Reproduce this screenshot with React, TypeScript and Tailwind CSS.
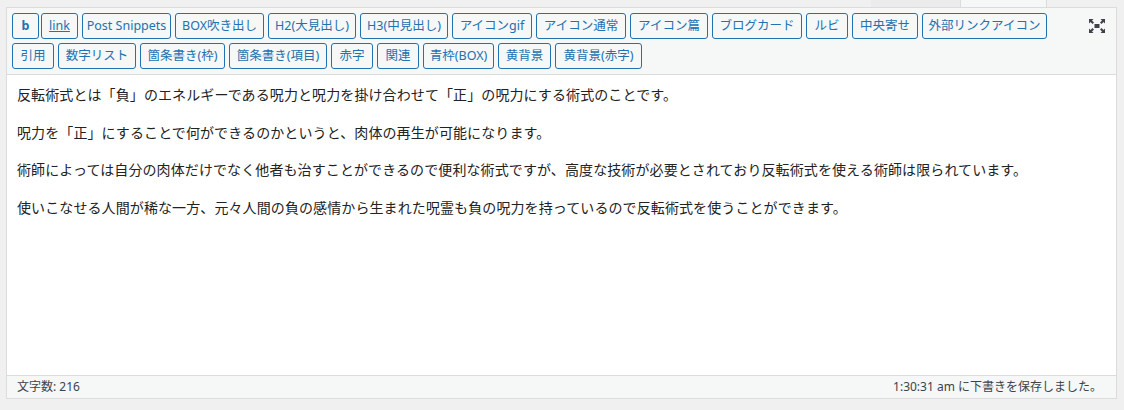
import React from "react";

const row1: { label: string; w: number; cls?: string }[] = [
  { label: "b", w: 27, cls: "font-bold !mr-0" },
  { label: "link", w: 37, cls: "underline" },
  { label: "Post Snippets", w: 89 },
  { label: "BOX吹き出し", w: 89 },
  { label: "H2(大見出し)", w: 88 },
  { label: "H3(中見出し)", w: 88 },
  { label: "アイコンgif", w: 80 },
  { label: "アイコン通常", w: 90 },
  { label: "アイコン篇", w: 78 },
  { label: "ブログカード", w: 90 },
  { label: "ルビ", w: 42 },
  { label: "中央寄せ", w: 66 },
  { label: "外部リンクアイコン", w: 125 },
];

const row2: { label: string; w: number; cls?: string }[] = [
  { label: "引用", w: 42 },
  { label: "数字リスト", w: 78 },
  { label: "箇条書き(枠)", w: 85 },
  { label: "箇条書き(項目)", w: 98 },
  { label: "赤字", w: 42 },
  { label: "関連", w: 42 },
  { label: "青枠(BOX)", w: 71 },
  { label: "黄背景", w: 53 },
  { label: "黄背景(赤字)", w: 87 },
];

const paragraphs = [
  "反転術式とは「負」のエネルギーである呪力と呪力を掛け合わせて「正」の呪力にする術式のことです。",
  "呪力を「正」にすることで何ができるのかというと、肉体の再生が可能になります。",
  "術師によっては自分の肉体だけでなく他者も治すことができるので便利な術式ですが、高度な技術が必要とされており反転術式を使える術師は限られています。",
  "使いこなせる人間が稀な一方、元々人間の負の感情から生まれた呪霊も負の呪力を持っているので反転術式を使うことができます。",
];

function QButton({ label, w, cls }: { label: string; w: number; cls?: string }) {
  return (
    <button
      style={{ width: w }}
      className={`m-[2px] h-[26px] shrink-0 rounded-[3px] border border-[#2271b1] bg-[#f6f7f7] px-0 text-center text-[12.5px] leading-[24px] text-[#2271b1] whitespace-nowrap ${cls ?? ""}`}
    >
      {label}
    </button>
  );
}

function ExpandIcon() {
  return (
    <svg width="16" height="14" viewBox="0 0 16 14" fill="#3c434a">
      <rect x="5.5" y="5" width="5" height="4" />
      <path d="M0 0h4.5l-1.5 1.5 2 2-1.5 1.5-2-2L0 4.5z" />
      <path d="M16 0h-4.5l1.5 1.5-2 2 1.5 1.5 2-2L16 4.5z" />
      <path d="M0 14h4.5l-1.5-1.5 2-2-1.5-1.5-2 2L0 9.5z" />
      <path d="M16 14h-4.5l1.5-1.5-2-2 1.5-1.5 2 2L16 9.5z" />
    </svg>
  );
}

export default function App() {
  return (
    <div
      className="h-[410px] w-[1124px] overflow-hidden bg-[#f0f0f1] pl-[6px]"
      style={{ fontFamily: '"Noto Sans", "Noto Sans CJK JP", sans-serif' }}
    >
      <div className="w-[1111px]">
        {/* tabs strip */}
        <div className="flex h-[7px] justify-end pr-[70px]">
          <div className="h-[7px] w-[90px] border-r border-[#dcdcde] bg-[#ebebeb]" />
          <div className="h-[7px] w-[86px] border-r border-[#dcdcde] bg-[#f6f7f7]" />
        </div>
        <div className="border border-[#dcdcde] bg-white">
          {/* toolbar */}
          <div className="flex items-start border-b border-[#dcdcde] bg-[#f6f7f7] p-[3px]">
            <div className="flex flex-col">
              <div className="flex">
                {row1.map((b) => (
                  <QButton key={b.label} {...b} />
                ))}
              </div>
              <div className="flex">
                {row2.map((b) => (
                  <QButton key={b.label} {...b} />
                ))}
              </div>
            </div>
            <div className="ml-auto mr-[8px] mt-[8px]">
              <ExpandIcon />
            </div>
          </div>
          {/* content */}
          <div
            className="h-[300px] px-[10px] pt-[10px] text-[14px] tracking-[0.1px] text-[#222]"
            style={{ fontFamily: '"Noto Sans CJK JP", sans-serif' }}
          >
            {paragraphs.map((p) => (
              <p key={p} className="mb-[18.8px] leading-[18.8px] whitespace-nowrap">
                {p}
              </p>
            ))}
          </div>
          {/* status bar */}
          <div className="flex h-[23px] items-center justify-between border-t border-[#dcdcde] bg-[#f6f7f7] pl-[10px] pr-[14px] text-[12px] text-[#3c434a]">
            <span>文字数: 216</span>
            <span>1:30:31 am に下書きを保存しました。</span>
          </div>
        </div>
      </div>
    </div>
  );
}
